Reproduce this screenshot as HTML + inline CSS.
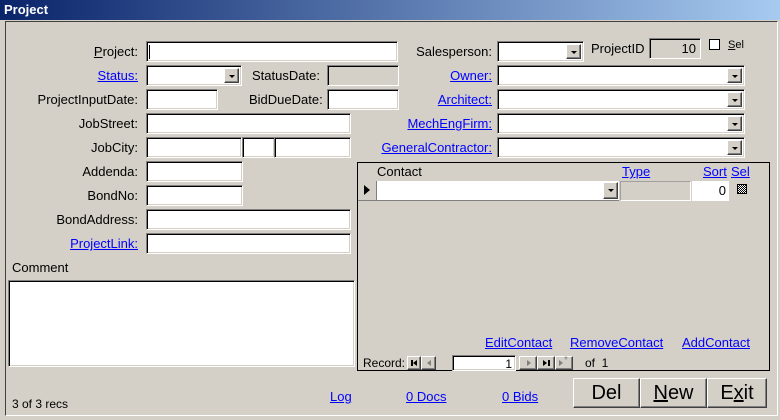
<!DOCTYPE html>
<html><head><style>
*{margin:0;padding:0;box-sizing:border-box}
body{width:780px;height:420px;background:#d4d0c8;font-family:"Liberation Sans",sans-serif;font-size:13px;color:#000;position:relative;overflow:hidden}
.a{position:absolute;white-space:nowrap}
.t{position:absolute;background:#fff;border-top:1px solid #808080;border-left:1px solid #808080;border-bottom:1px solid #fff;border-right:1px solid #fff;box-shadow:inset 1px 1px 0 #000,inset -1px -1px 0 #d4d0c8}
.g{background:#d4d0c8}
.r{text-align:right}
.l{color:#0000ff;text-decoration:underline}
.b{position:absolute;background:#d4d0c8;border-top:1px solid #fff;border-left:1px solid #fff;border-right:1px solid #404040;border-bottom:1px solid #404040;box-shadow:inset -1px -1px 0 #808080}
.dd{position:absolute;right:2px;top:2px;width:15px;bottom:2px}
.dd:after{content:"";position:absolute;left:4px;top:6px;border-left:3px solid transparent;border-right:3px solid transparent;border-top:3px solid #000}
.btn{position:absolute;top:378px;height:30px;font-size:20px;text-align:center;line-height:28px;background:#d4d0c8;border-top:1px solid #fff;border-left:1px solid #fff;border-right:1px solid #404040;border-bottom:1px solid #404040;box-shadow:inset -1px -1px 0 #808080}
</style></head><body>
<div class="a" style="left:0;top:0;width:780px;height:20px;background:linear-gradient(90deg,#0a246a,#a6caf0);"></div>
<div class="a" style="left:4px;top:2px;color:#fff;font-weight:bold;font-size:13px">Project</div>
<div class="a" style="left:5px;top:21px;width:773px;height:395px;border-top:1px solid #404040;border-left:1px solid #404040;border-right:1px solid #fff;border-bottom:1px solid #fff"></div>

<div class="a r" style="right:642px;top:44px"><u>P</u>roject:</div>
<div class="t" style="left:146px;top:41px;width:252px;height:21px"><div class="a" style="left:2px;top:3px;width:1px;height:14px;background:#000"></div></div>
<div class="a r l" style="right:642px;top:68px">Status:</div>
<div class="t" style="left:146px;top:65px;width:96px;height:21px"><div class="b dd"></div></div>
<div class="a" style="left:252px;top:68px">StatusDate:</div>
<div class="t g" style="left:327px;top:65px;width:72px;height:21px"></div>
<div class="a r" style="right:642px;top:92px">ProjectInputDate:</div>
<div class="t" style="left:146px;top:89px;width:72px;height:21px"></div>
<div class="a" style="left:249px;top:92px">BidDueDate:</div>
<div class="t" style="left:327px;top:89px;width:72px;height:21px"></div>
<div class="a r" style="right:642px;top:116px">JobStreet:</div>
<div class="t" style="left:146px;top:113px;width:205px;height:21px"></div>
<div class="a r" style="right:642px;top:140px">JobCity:</div>
<div class="t" style="left:146px;top:137px;width:96px;height:21px"></div>
<div class="t" style="left:242px;top:137px;width:33px;height:21px"></div>
<div class="t" style="left:274px;top:137px;width:77px;height:21px"></div>
<div class="a r" style="right:642px;top:164px">Addenda:</div>
<div class="t" style="left:146px;top:161px;width:97px;height:21px"></div>
<div class="a r" style="right:642px;top:188px">BondNo:</div>
<div class="t" style="left:146px;top:185px;width:97px;height:21px"></div>
<div class="a r" style="right:642px;top:212px">BondAddress:</div>
<div class="t" style="left:146px;top:209px;width:205px;height:21px"></div>
<div class="a r l" style="right:642px;top:236px">ProjectLink:</div>
<div class="t" style="left:146px;top:233px;width:205px;height:21px"></div>
<div class="a" style="left:12px;top:260px">Comment</div>
<div class="t" style="left:8px;top:280px;width:347px;height:87px"></div>
<div class="a" style="left:12px;top:397px;font-size:12px">3 of 3 recs</div>

<div class="a r" style="right:288px;top:44px">Salesperson:</div>
<div class="t" style="left:497px;top:41px;width:87px;height:21px"><div class="b dd"></div></div>
<div class="a" style="left:591px;top:41px">ProjectID</div>
<div class="t g r" style="left:649px;top:38px;width:52px;height:21px;padding:2px 4px 0 0">10</div>
<div class="a" style="left:709px;top:39px;width:11px;height:11px;background:#fff;border:1px solid #000"></div>
<div class="a" style="left:728px;top:39px;font-size:11px"><u>S</u>el</div>
<div class="a r l" style="right:288px;top:68px">Owner:</div>
<div class="t" style="left:497px;top:65px;width:248px;height:21px"><div class="b dd"></div></div>
<div class="a r l" style="right:288px;top:92px">Architect:</div>
<div class="t" style="left:497px;top:89px;width:248px;height:21px"><div class="b dd"></div></div>
<div class="a r l" style="right:288px;top:116px">MechEngFirm:</div>
<div class="t" style="left:497px;top:113px;width:248px;height:21px"><div class="b dd"></div></div>
<div class="a r l" style="right:288px;top:140px">GeneralContractor:</div>
<div class="t" style="left:497px;top:137px;width:248px;height:21px"><div class="b dd"></div></div>

<div class="a" style="left:357px;top:162px;width:413px;height:209px;border:1px solid #000"></div>
<div class="a" style="left:377px;top:164px">Contact</div>
<div class="a l" style="left:622px;top:164px">Type</div>
<div class="a l" style="left:703px;top:164px">Sort</div>
<div class="a l" style="left:731px;top:164px">Sel</div>
<div class="a" style="left:358px;top:181px;width:19px;height:20px;border-right:1px solid #808080;border-bottom:1px solid #808080"><div class="a" style="left:6px;top:4px;border-top:5px solid transparent;border-bottom:5px solid transparent;border-left:6px solid #000"></div></div>
<div class="a" style="left:377px;top:181px;width:242px;height:20px;background:#fff;border-bottom:1px solid #808080"><div class="b dd" style="right:1px;top:1px;bottom:1px"></div></div>
<div class="a" style="left:620px;top:181px;width:71px;height:20px;border:1px solid #a0a0a0;border-right-color:#fff;border-bottom-color:#fff"></div>
<div class="a r" style="left:692px;top:181px;width:37px;height:20px;background:#fff;padding:2px 3px 0 0">0</div>
<div class="a" style="left:737px;top:184px;width:10px;height:10px;border:1px solid #000;background:repeating-conic-gradient(#000 0 25%,#fff 0 50%) 0 0/2px 2px"></div>
<div class="a l" style="left:485px;top:335px">EditContact</div>
<div class="a l" style="left:570px;top:335px">RemoveContact</div>
<div class="a l" style="left:682px;top:335px">AddContact</div>
<div class="a" style="left:363px;top:356px;font-size:12px">Record:</div>
<div class="b" style="left:407px;top:356px;width:14px;height:14px"><div class="a" style="left:3px;top:3px;width:2px;height:6px;background:#000"></div><div class="a" style="left:5px;top:3px;border-top:3px solid transparent;border-bottom:3px solid transparent;border-right:4px solid #000"></div></div>
<div class="b" style="left:421px;top:356px;width:15px;height:14px"><div class="a" style="left:5px;top:3px;border-top:3px solid transparent;border-bottom:3px solid transparent;border-right:4px solid #808080"></div></div>
<div class="t r" style="left:452px;top:355px;width:64px;height:16px;padding:1px 3px 0 0;font-size:12px">1</div>
<div class="b" style="left:519px;top:356px;width:18px;height:14px"><div class="a" style="left:7px;top:3px;border-top:3px solid transparent;border-bottom:3px solid transparent;border-left:4px solid #808080"></div></div>
<div class="b" style="left:537px;top:356px;width:18px;height:14px"><div class="a" style="left:5px;top:3px;border-top:3px solid transparent;border-bottom:3px solid transparent;border-left:4px solid #000"></div><div class="a" style="left:10px;top:3px;width:2px;height:6px;background:#000"></div></div>
<div class="b" style="left:555px;top:356px;width:18px;height:14px"><div class="a" style="left:3px;top:3px;border-top:3px solid transparent;border-bottom:3px solid transparent;border-left:4px solid #808080"></div><div class="a" style="left:8px;top:-2px;font-size:10px;color:#808080">*</div></div>
<div class="a" style="left:585px;top:356px;font-size:12px">of &nbsp;1</div>

<div class="a l" style="left:330px;top:389px">Log</div>
<div class="a l" style="left:406px;top:389px">0 Docs</div>
<div class="a l" style="left:502px;top:389px">0 Bids</div>
<div class="btn" style="left:573px;width:67px">Del</div>
<div class="btn" style="left:640px;width:67px"><u>N</u>ew</div>
<div class="btn" style="left:707px;width:60px">E<u>x</u>it</div>
</body></html>
